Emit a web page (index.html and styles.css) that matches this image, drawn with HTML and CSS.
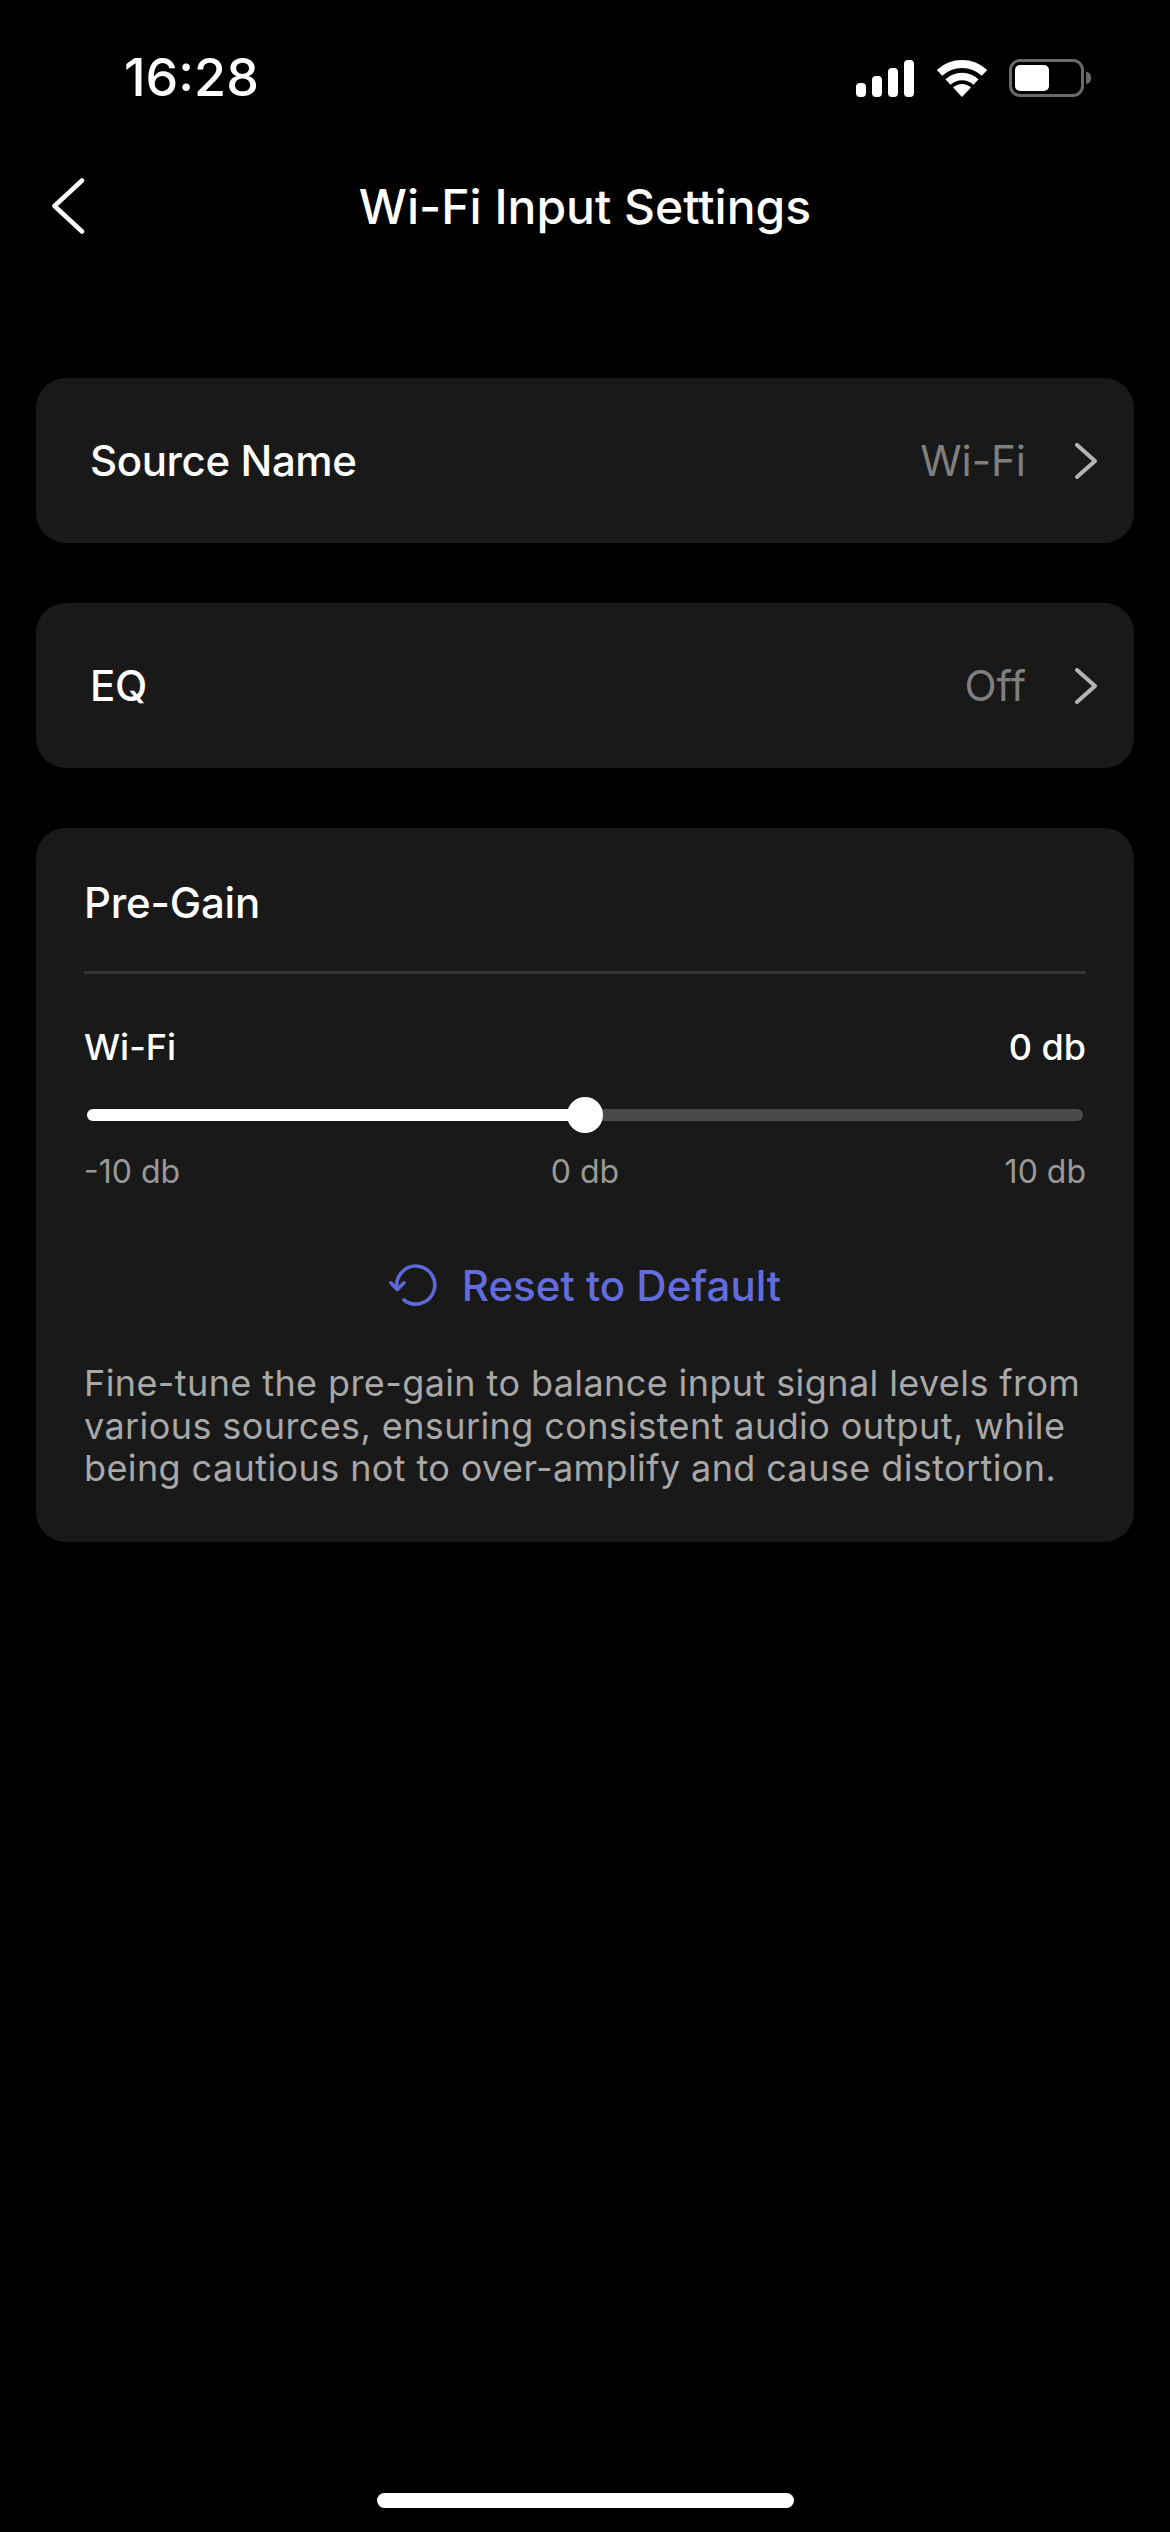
FILE: index.html
```html
<!DOCTYPE html>
<html lang="en">
<head>
    <meta charset="UTF-8">
    <title>Wi-Fi Input Settings</title>
    <link rel="stylesheet" href="styles.css">
</head>
<body>
    <div class="page">
        <div class="status-bar">
            <span class="time">16:28</span>
            <div class="status-icons">
                <div class="signal">
                    <span class="bar bar-1"></span>
                    <span class="bar bar-2"></span>
                    <span class="bar bar-3"></span>
                    <span class="bar bar-4"></span>
                </div>
                <svg class="wifi" width="50" height="37" viewBox="0 0 50 37">
                    <path d="M2.5 12.9A33 33 0 0 1 47.5 12.9" fill="none" stroke="#fff" stroke-width="8"/>
                    <path d="M11 22A20.5 20.5 0 0 1 39 22" fill="none" stroke="#fff" stroke-width="7.5"/>
                    <path d="M25 37L16.1 27.5A13 13 0 0 1 33.9 27.5Z" fill="#fff"/>
                </svg>
                <div class="battery">
                    <div class="battery-body"><div class="battery-level"></div></div>
                    <div class="battery-nub"></div>
                </div>
            </div>
        </div>

        <div class="nav-bar">
            <svg class="back" width="34" height="56" viewBox="0 0 34 56">
                <path d="M31 2.5L3.5 28L31 53.5" fill="none" stroke="#fff" stroke-width="4.5" stroke-linecap="round" stroke-linejoin="round"/>
            </svg>
            <h1 class="nav-title">Wi-Fi Input Settings</h1>
        </div>

        <div class="content">
            <div class="card row">
                <span class="row-label">Source Name</span>
                <span class="row-value">Wi-Fi</span>
                <svg class="chevron" width="24" height="36" viewBox="0 0 24 36">
                    <path d="M3 2L21 18L3 34" fill="none" stroke="#b4b4b4" stroke-width="4" stroke-linecap="round" stroke-linejoin="round"/>
                </svg>
            </div>

            <div class="card row">
                <span class="row-label">EQ</span>
                <span class="row-value">Off</span>
                <svg class="chevron" width="24" height="36" viewBox="0 0 24 36">
                    <path d="M3 2L21 18L3 34" fill="none" stroke="#b4b4b4" stroke-width="4" stroke-linecap="round" stroke-linejoin="round"/>
                </svg>
            </div>

            <div class="card gain">
                <h2 class="gain-title">Pre-Gain</h2>
                <div class="gain-head">
                    <span>Wi-Fi</span>
                    <span>0 db</span>
                </div>
                <div class="slider">
                    <div class="track">
                        <div class="track-fill" style="width: 50%">
                            <div class="thumb"></div>
                        </div>
                    </div>
                </div>
                <div class="ticks">
                    <span>-10 db</span>
                    <span>0 db</span>
                    <span class="tick-end">10 db</span>
                </div>
                <div class="reset">
                    <svg class="reset-icon" width="48" height="42" viewBox="0 0 48 42">
                        <path d="M8 24A19 19 0 1 1 15 36" fill="none" stroke="#5f68d9" stroke-width="3.6" stroke-linecap="round"/>
                        <path d="M1.8 18.8L8.3 25.5L15 18.8" fill="none" stroke="#5f68d9" stroke-width="3.6" stroke-linecap="round" stroke-linejoin="round"/>
                    </svg>
                    <span>Reset to Default</span>
                </div>
                <p class="gain-note">Fine-tune the pre-gain to balance input signal levels from various sources, ensuring consistent audio output, while being cautious not to over-amplify and cause distortion.</p>
            </div>
        </div>

        <div class="home-indicator"></div>
    </div>
</body>
</html>
```

FILE: styles.css
```css
* {
    box-sizing: border-box;
}
body {
    margin: 0;
    background-color: #000;
    color: #fff;
    font-family: Inter, "Liberation Sans", sans-serif;
}
.page {
    display: flex;
    flex-direction: column;
    height: 2532px;
    overflow: hidden;
}
.status-bar {
    display: flex;
    align-items: center;
    justify-content: space-between;
    height: 44px;
    margin-top: 56px;
    padding: 0 79px 0 124px;
}
.time {
    font-size: 52px;
    font-weight: 500;
    line-height: 44px;
}
.status-icons {
    display: flex;
    align-items: flex-end;
}
.signal {
    display: flex;
    align-items: flex-end;
    gap: 6px;
    height: 37px;
    margin-right: 23px;
}
.bar {
    width: 10px;
    background-color: #fff;
    border-radius: 4px;
}
.bar-1 { height: 14px; }
.bar-2 { height: 21px; }
.bar-3 { height: 29px; }
.bar-4 { height: 37px; }
.wifi {
    display: block;
    margin-right: 22px;
}
.battery {
    display: flex;
    align-items: center;
    gap: 2px;
}
.battery-body {
    width: 75px;
    height: 38px;
    padding: 3px;
    border: 3px solid #6a6a6a;
    border-radius: 11px;
}
.battery-level {
    width: 34px;
    height: 26px;
    background-color: #fff;
    border-radius: 5px;
}
.battery-nub {
    width: 5px;
    height: 12px;
    background-color: #6a6a6a;
    border-radius: 0 6px 6px 0;
}
.nav-bar {
    display: flex;
    align-items: center;
    justify-content: center;
    position: relative;
    height: 100px;
    margin-top: 56px;
}
.back {
    position: absolute;
    left: 51px;
    top: 22px;
}
.nav-title {
    margin: 0;
    font-size: 48px;
    font-weight: 500;
}
.content {
    display: flex;
    flex-direction: column;
    gap: 60px;
    padding: 122px 36px 0;
}
.card {
    background-color: #191919;
    border-radius: 30px;
}
.row {
    display: flex;
    align-items: center;
    height: 165px;
    padding: 0 36px 0 54px;
}
.row-label {
    flex: 1;
    font-size: 42px;
    font-weight: 450;
    letter-spacing: -0.4px;
}
.row-value {
    margin-right: 48px;
    color: #7f7f7f;
    font-size: 42px;
}
.chevron {
    display: block;
}
.gain {
    padding: 0 48px 52px;
}
.gain-title {
    height: 146px;
    margin: 0;
    padding-top: 50px;
    border-bottom: 3px solid #333;
    font-size: 42px;
    font-weight: 450;
    letter-spacing: -0.2px;
    line-height: 50px;
}
.gain-head {
    display: flex;
    justify-content: space-between;
    margin-top: 51px;
    font-size: 36px;
    font-weight: 450;
    line-height: 44px;
}
.slider {
    display: flex;
    align-items: center;
    height: 36px;
    margin-top: 28px;
    padding: 0 3px;
}
.track {
    flex: 1;
    height: 12px;
    background-color: #4a4a4a;
    border-radius: 6px;
}
.track-fill {
    position: relative;
    height: 100%;
    background-color: #fff;
    border-radius: 6px 0 0 6px;
}
.thumb {
    position: absolute;
    right: -18px;
    top: -12px;
    width: 36px;
    height: 36px;
    background-color: #fff;
    border-radius: 50%;
}
.ticks {
    display: grid;
    grid-template-columns: 1fr auto 1fr;
    margin-top: 21px;
    color: #999;
    font-size: 32px;
    line-height: 36px;
}
.tick-end {
    text-align: right;
}
.reset {
    display: flex;
    align-items: center;
    justify-content: center;
    gap: 25px;
    height: 50px;
    margin-top: 70px;
    color: #636cdd;
    font-size: 42px;
    font-weight: 450;
}
.reset-icon {
    display: block;
}
.gain-note {
    margin: 52px 0 0;
    color: #a8a8a8;
    font-size: 36px;
    letter-spacing: 0.4px;
    line-height: 42.5px;
}
.home-indicator {
    align-self: center;
    width: 417px;
    height: 15px;
    margin-top: auto;
    margin-bottom: 24px;
    background-color: #fff;
    border-radius: 8px;
}
```
